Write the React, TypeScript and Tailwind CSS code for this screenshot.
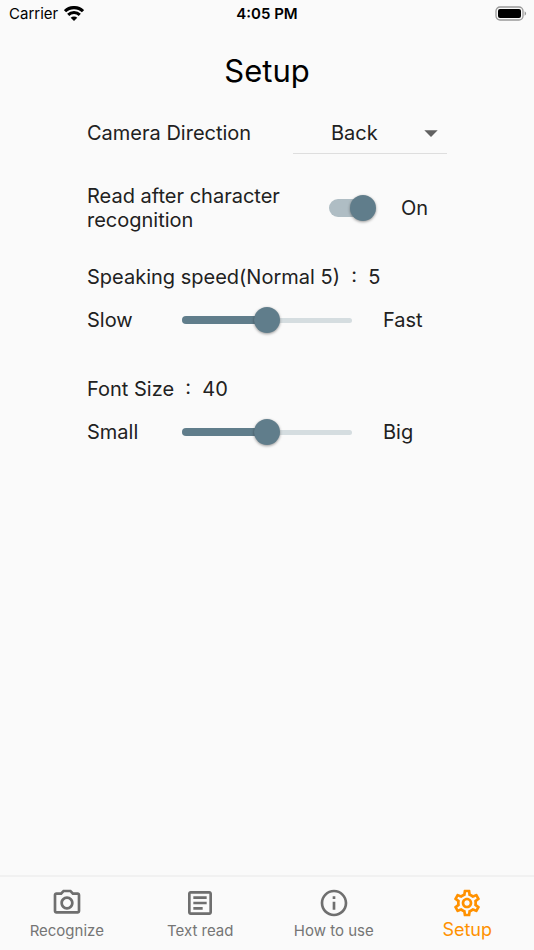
import { useState } from "react";
import {
  MdArrowDropDown,
  MdOutlineArticle,
  MdOutlineCameraAlt,
  MdOutlineInfo,
  MdOutlineSettings,
} from "react-icons/md";

const tabs = [
  { name: "Recognize", icon: MdOutlineCameraAlt },
  { name: "Text read", icon: MdOutlineArticle },
  { name: "How to use", icon: MdOutlineInfo },
  { name: "Setup", icon: MdOutlineSettings },
];

function StatusBar() {
  return (
    <div className="grid h-7 grid-cols-3 items-center px-[7px] text-[15px] leading-5 text-black">
      <div className="flex items-center gap-[6px] pl-[2px]">
        <span>Carrier</span>
        <svg viewBox="0 0 20 15" className="mb-[2px] h-[15px] w-5" fill="none" stroke="#000">
          <path d="M1 5.2a13 13 0 0 1 18 0" strokeWidth="3.2" />
          <path d="M4.2 8.9a8.2 8.2 0 0 1 11.6 0" strokeWidth="3" />
          <path d="M10 15 6.7 11.8a4.6 4.6 0 0 1 6.6 0z" fill="#000" stroke="none" />
        </svg>
      </div>
      <span className="text-center font-semibold">4:05 PM</span>
      <svg viewBox="0 0 32 15" className="mb-[2px] h-[15px] w-8 justify-self-end">
        <rect x="1" y="1" width="27" height="13" rx="4" fill="none" stroke="#999" strokeWidth="1.3" />
        <rect x="3" y="3" width="23" height="9" rx="2" fill="#000" />
        <path d="M29.6 5.3c2 .8 2 3.6 0 4.4z" fill="#999" />
      </svg>
    </div>
  );
}

interface SliderProps {
  id: string;
  title: string;
  min: number;
  max: number;
  low: string;
  high: string;
  value: number;
  onChange: (value: number) => void;
}

function Slider({ id, title, min, max, low, high, value, onChange }: SliderProps) {
  const percent = ((value - min) / (max - min)) * 100;

  return (
    <div>
      <label htmlFor={id} className="block leading-6 whitespace-pre">
        {title}
        {"  :  "}
        {value}
      </label>
      <div className="mt-[15px] flex items-center">
        <span className="w-[95px] leading-8">{low}</span>
        <div className="grid flex-1 items-center">
          <div className="col-start-1 row-start-1 h-[5px] rounded-full bg-[#d5dde0]" />
          <div
            className="col-start-1 row-start-1 h-2 rounded-full bg-[#607d8b]"
            style={{ width: `${percent}%` }}
          />
          <input
            id={id}
            type="range"
            min={min}
            max={max}
            value={value}
            onChange={(e) => onChange(Number(e.target.value))}
            className="z-10 col-start-1 row-start-1 h-7 w-full cursor-pointer appearance-none bg-transparent [&::-webkit-slider-thumb]:size-[26px] [&::-webkit-slider-thumb]:appearance-none [&::-webkit-slider-thumb]:rounded-full [&::-webkit-slider-thumb]:bg-[#607d8b] [&::-webkit-slider-thumb]:shadow-[0_1px_3px_rgba(0,0,0,0.4)]"
          />
        </div>
        <span className="w-[95px] pl-[31px] leading-8">{high}</span>
      </div>
    </div>
  );
}

export default function App() {
  const [direction, setDirection] = useState("Back");
  const [readAfter, setReadAfter] = useState(true);
  const [speed, setSpeed] = useState(5);
  const [fontSize, setFontSize] = useState(40);
  const [active, setActive] = useState("Setup");

  return (
    <div className="flex min-h-screen flex-col bg-[#fafafa] font-['Inter','Liberation_Sans',sans-serif] text-[#212121]">
      <StatusBar />

      <main className="mx-auto w-full max-w-[360px] flex-1 text-xl">
        <h1 className="mt-[23px] text-center text-[31px] leading-10 text-black">Setup</h1>

        <div className="mt-[21px] flex items-center">
          <label htmlFor="direction" className="flex-1 whitespace-nowrap">
            Camera Direction
          </label>
          <div className="grid w-[154px] items-center border-b border-[#dedede]">
            <select
              id="direction"
              value={direction}
              onChange={(e) => setDirection(e.target.value)}
              className="col-start-1 row-start-1 h-[41px] w-full cursor-pointer appearance-none bg-transparent pl-[38px]"
            >
              <option>Back</option>
              <option>Front</option>
            </select>
            <MdArrowDropDown className="pointer-events-none col-start-1 row-start-1 size-8 justify-self-end text-[#616161]" />
          </div>
        </div>

        <div className="mt-[30px] flex items-center">
          <label htmlFor="read-after" className="flex-1 leading-6">
            Read after character recognition
          </label>
          <div className="flex w-[118px] items-center">
            <input
              id="read-after"
              type="checkbox"
              role="switch"
              checked={readAfter}
              onChange={(e) => setReadAfter(e.target.checked)}
              className="flex h-[18px] w-[47px] cursor-pointer appearance-none items-center rounded-full bg-linear-to-r from-[#c4c4c4] from-90% to-transparent to-90% before:size-[26px] before:shrink-0 before:rounded-full before:bg-white before:shadow-[0_1px_3px_rgba(0,0,0,0.4)] checked:justify-end checked:from-[#afbdc4] checked:before:bg-[#607d8b]"
            />
            <span className="ml-[25px]">{readAfter ? "On" : "Off"}</span>
          </div>
        </div>

        <div className="mt-[33px] space-y-[41px]">
          <Slider
            id="speed"
            title="Speaking speed(Normal 5)"
            min={0}
            max={10}
            low="Slow"
            high="Fast"
            value={speed}
            onChange={setSpeed}
          />
          <Slider
            id="font-size"
            title="Font Size"
            min={10}
            max={70}
            low="Small"
            high="Big"
            value={fontSize}
            onChange={setFontSize}
          />
        </div>
      </main>

      <nav className="grid grid-cols-4 border-t-2 border-[#f1f1f1]">
        {tabs.map(({ name, icon: Icon }) => (
          <button
            key={name}
            type="button"
            onClick={() => setActive(name)}
            className={`flex h-[73px] cursor-pointer flex-col items-center pt-[10px] ${
              active === name ? "text-lg text-[#ff9100]" : "text-[15px] text-[#757575]"
            }`}
          >
            <Icon className={`size-8 ${active === name ? "" : "text-[#6f6f6f]"}`} />
            <span className={active === name ? "leading-[22px]" : "leading-6"}>{name}</span>
          </button>
        ))}
      </nav>
    </div>
  );
}
